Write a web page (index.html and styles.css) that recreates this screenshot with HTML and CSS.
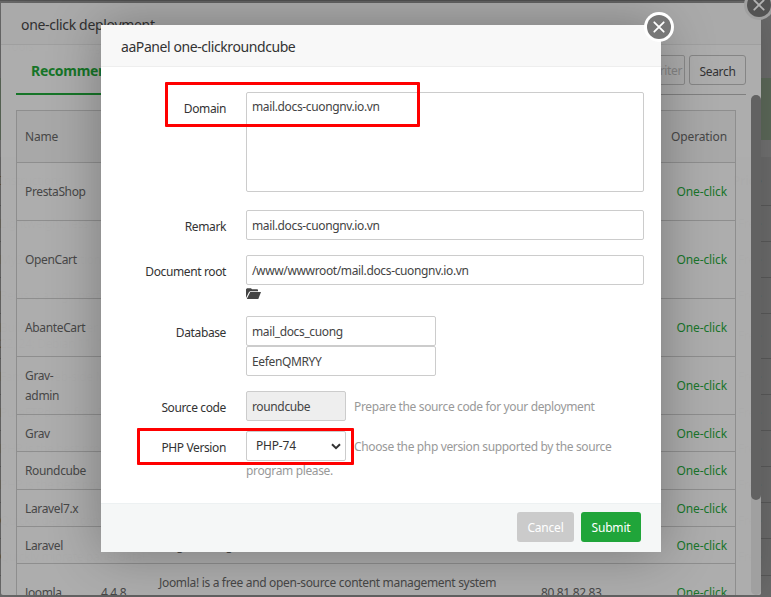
FILE: index.html
```html
<!DOCTYPE html>
<html lang="en">
<head>
<meta charset="utf-8">
<title>aaPanel</title>
<link rel="stylesheet" href="styles.css">
</head>
<body>
<div class="page">
  <div class="page-top"><span>Tools</span><span class="plug">Plugins</span></div>
  <div class="page-notice"></div>
  <div class="page-row head"><span>Instructions</span><span class="price">Price</span></div>
  <div class="page-row first"><span>Lightweight, less memory</span><span>Free</span></div>
  <div class="page-row"><span>MySQL is a relational</span><span>Free</span></div>
  <div class="page-row"><span>Redis is a high performance</span><span>Free</span></div>
  <div class="page-row tall"><span>Build a mail server for<br>22, 24; Debian 11, 12</span><span>Free</span></div>
  <div class="page-row"><span>Famous web-side MySQL</span><span>Free</span></div>
  <div class="page-row"><span>PureFTPd is a free FTP</span><span>Free</span></div>
  <div class="page-row"><span>PHP is the best programming</span><span>Free</span></div>
  <div class="page-row"><span>PHP is the best programming</span><span>Free</span></div>
  <div class="page-row"><span>Quickly deploy common</span><span>Free</span></div>
  <div class="page-row last"><span>Quickly migrate panel data!</span><span>Free</span></div>
</div>

<section class="deploy">
  <header class="deploy-title">one-click deployment</header>
  <svg class="close dim" viewBox="0 0 30 30"><circle class="ring" cx="15" cy="15" r="15"/><circle class="disc" cx="15" cy="15" r="12"/><path d="M10.3 10.3l9.4 9.4M19.7 10.3l-9.4 9.4"/></svg>
  <div class="deploy-tabs">
    <div class="tab">Recommended</div>
    <div class="search"><div class="search-input">Search criter</div><div class="search-button">Search</div></div>
  </div>
  <div class="deploy-body">
    <div class="table">
      <div class="tr th"><span>Name</span><span>Version</span><span>Description</span><span>PHP</span><span>Operation</span></div>
      <div class="tr h58"><span>PrestaShop</span><span></span><span></span><span></span><span class="go">One-click</span></div>
      <div class="tr h78"><span>OpenCart</span><span></span><span></span><span></span><span class="go">One-click</span></div>
      <div class="tr h58"><span>AbanteCart</span><span></span><span></span><span></span><span class="go">One-click</span></div>
      <div class="tr h58"><span>Grav-<br>admin</span><span></span><span></span><span></span><span class="go">One-click</span></div>
      <div class="tr h37"><span>Grav</span><span></span><span></span><span></span><span class="go">One-click</span></div>
      <div class="tr h38"><span>Roundcube</span><span></span><span></span><span></span><span class="go">One-click</span></div>
      <div class="tr h37"><span>Laravel7.x</span><span></span><span></span><span></span><span class="go">One-click</span></div>
      <div class="tr h37"><span>Laravel</span><span></span><span>Programming framework</span><span></span><span class="go">One-click</span></div>
      <div class="tr h58"><span>Joomla</span><span>4.4.8</span><span class="desc">Joomla! is a free and open-source content management system</span><span>80,81,82,83</span><span class="go">One-click</span></div>
    </div>
    <div class="track"><div class="thumb"></div></div>
  </div>
</section>

<section class="dialog">
  <header class="dialog-title">aaPanel one-clickroundcube</header>
  <svg class="close" viewBox="0 0 30 30"><circle class="ring" cx="15" cy="15" r="15"/><circle class="disc" cx="15" cy="15" r="12"/><path d="M10.3 10.3l9.4 9.4M19.7 10.3l-9.4 9.4"/></svg>
  <div class="form">
    <div class="row domain"><label>Domain</label><div class="field area">mail.docs-cuongnv.io.vn</div></div>
    <div class="row remark"><label>Remark</label><div class="field wide">mail.docs-cuongnv.io.vn</div></div>
    <div class="row root"><label>Document root</label>
      <div><div class="field wide">/www/wwwroot/mail.docs-cuongnv.io.vn</div>
        <svg class="folder" viewBox="0 0 15 11"><path d="M0 10V1.2L1 .3h4l1 1h5.5l.5.7v1.2H4.2L3 4z"/><path d="M4.2 4H15l-2.7 7H.8z"/></svg>
      </div>
    </div>
    <div class="row database"><label>Database</label>
      <div><div class="field half">mail_docs_cuong</div><div class="field half">EefenQMRYY</div></div>
    </div>
    <div class="row source"><label>Source code</label><div class="field short">roundcube</div><p class="hint">Prepare the source code for your deployment</p></div>
    <div class="row php"><label>PHP Version</label>
      <div class="php-cell"><div class="php-line"><div class="field select">PHP-74<svg viewBox="0 0 10 7"><path d="M1 1.2l4 4 4-4"/></svg></div><span class="hint">Choose the php version supported by the source</span></div><p class="hint more">program please.</p></div>
    </div>
  </div>
  <footer class="dialog-foot"><div class="btn cancel">Cancel</div><div class="btn submit">Submit</div></footer>
</section>

<div class="mark mark-domain"></div>
<div class="mark mark-php"></div>
</body>
</html>
```
FILE: styles.css
```css
* { box-sizing: border-box; }
body { margin: 0; width: 771px; height: 597px; position: relative; overflow: hidden; background: #6b6b6b; font: 12px/20px "Noto Sans", sans-serif; letter-spacing: -.36px; color: #484848; }
p { margin: 0; }

.page { position: absolute; inset: 0; color: #333; background: #6d6d6d; border-top: 1px solid #585858; }
.page-top { height: 77px; padding: 36px 0 0 6px; display: flex; gap: 44px; }
.page-notice { height: 62px; background: #5e6b5b; }
.page-row { height: 36px; border-bottom: 1px solid #5b5b5b; display: flex; justify-content: space-between; align-items: center; padding-right: 10px; }
.page-row.head { height: 66px; border-top: 17px solid #737373; }
.page-row.first { height: 36px; }
.page-row.tall { height: 45px; line-height: 16px; }
.page-row.last { height: 37px; }
.page-row .price { font-weight: bold; }

.deploy { position: absolute; left: 1px; top: 3px; width: 760px; height: 592px; background: rgba(176, 176, 176, .97); box-shadow: 1px 1px 50px rgba(0, 0, 0, .22); display: flex; flex-direction: column; border-radius: 2px; }
.deploy-title { height: 42px; padding-left: 20px; font-size: 14px; line-height: 43px; letter-spacing: -.32px; color: #303030; border-bottom: 1px solid #9f9f9f; background: #aaa; }
.deploy-tabs { height: 47px; margin: 3px 15px 0 15px; border-bottom: 1px solid #808080; display: flex; justify-content: space-between; }
.tab { height: 47px; width: 120px; padding-left: 15px; line-height: 45px; font-size: 14px; font-weight: bold; letter-spacing: -.3px; color: #167528; border-bottom: 2px solid #167528; }
.search { display: flex; gap: 4px; padding-top: 7px; }
.search-input { width: 106px; height: 30px; border: 1px solid #898989; border-radius: 2px; line-height: 30px; padding-right: 2px; text-align: right; white-space: nowrap; color: #868686; overflow: hidden; }
.search-button { width: 57px; height: 30px; border: 1px solid #858585; border-radius: 3px; line-height: 31px; text-align: center; letter-spacing: -.3px; color: #333; }
.deploy-body { height: 500px; display: flex; justify-content: space-between; overflow: hidden; padding-left: 15px; }
.table { width: 720px; height: 520px; margin-top: 15px; border: 1px solid #8e8e8e; color: #474747; }
.tr { display: grid; grid-template-columns: 76px 57px 383px 113px 89px; border-bottom: 1px solid #8e8e8e; align-items: center; }
.tr > span { padding-left: 8px; }
.tr > span:last-child { padding: 0 8px 0 0; text-align: right; letter-spacing: -.12px; }
.th { height: 52px; background: #a8a8a8; letter-spacing: -.15px; }
.h58 { height: 58px; }
.h78 { height: 78px; }
.h37 { height: 37px; padding-top: 1px; }
.h38 { height: 38px; }
.tr .desc { align-self: start; padding: 9px 0 0 9px; letter-spacing: -.32px; }
.tr .go { color: #18752a; }
.track { width: 10px; height: 500px; border-radius: 5px; background: #a0a0a0; }
.thumb { height: 405px; border-radius: 5px; background: #626262; }

.close { position: absolute; width: 30px; height: 30px; right: -13px; top: -13px; z-index: 2; }
.close .ring { fill: #fff; }
.close .disc { fill: #777; }
.close path { fill: none; stroke: #fff; stroke-width: 1.8; stroke-linecap: round; }
.close.dim .ring { fill: #a0a0a0; }
.close.dim .disc { fill: #535353; }
.close.dim path { stroke: #b2b2b2; }

.dialog { position: absolute; left: 101px; top: 25px; width: 560px; height: 527px; background: #fff; box-shadow: 1px 1px 50px rgba(0, 0, 0, .3); display: flex; flex-direction: column; }
.dialog-title { height: 42px; padding-left: 20px; background: #f8f8f8; border-bottom: 1px solid #eee; line-height: 43px; font-size: 14px; letter-spacing: -.42px; color: #333; }
.form { flex: 1; padding: 25px 17px 0 0; color: #333; }
.row { display: flex; }
.row > label { width: 125px; margin-right: 20px; text-align: right; line-height: 34px; letter-spacing: -.38px; flex: none; }
.field { border: 1px solid #ccc; border-radius: 2px; height: 30px; line-height: 30px; padding-left: 5px; background: #fff; color: #444; }
.wide { width: 398px; }
.area { width: 398px; height: 100px; line-height: 28px; }
.half { width: 190px; }
.short { width: 100px; background: #eee; flex: none; }
.domain { height: 118px; }
.remark { height: 45px; }
.root { height: 61px; }
.database { height: 75px; }
.source { height: 40px; }
.folder { display: block; width: 15px; height: 11px; margin-top: 3px; fill: #444; }
.hint { color: #999; line-height: 32px; padding-left: 8px; white-space: nowrap; }
.php-cell .more { padding: 0; line-height: 16px; }
.php-line { display: flex; }
.select { width: 100px; padding: 0 4px 0 9px; display: flex; justify-content: space-between; align-items: center; flex: none; letter-spacing: -.2px; color: #333; }
.select svg { width: 10px; height: 7px; fill: none; stroke: #333; stroke-width: 2; }
.dialog-foot { height: 49px; background: #f5f7f7; border-top: 1px solid #edf1f2; padding: 8px 20px 0; display: flex; justify-content: flex-end; gap: 7px; }
.btn { height: 30px; border-radius: 3px; line-height: 32px; text-align: center; letter-spacing: -.2px; color: #fff; }
.cancel { width: 57px; background: #cbcbcb; }
.submit { width: 60px; background: #20a53a; }

.mark { position: absolute; border: 3px solid #f00; border-radius: 1px; z-index: 5; }
.mark-domain { left: 165px; top: 82px; width: 255px; height: 45px; }
.mark-php { left: 137px; top: 428px; width: 217px; height: 37px; }
```
